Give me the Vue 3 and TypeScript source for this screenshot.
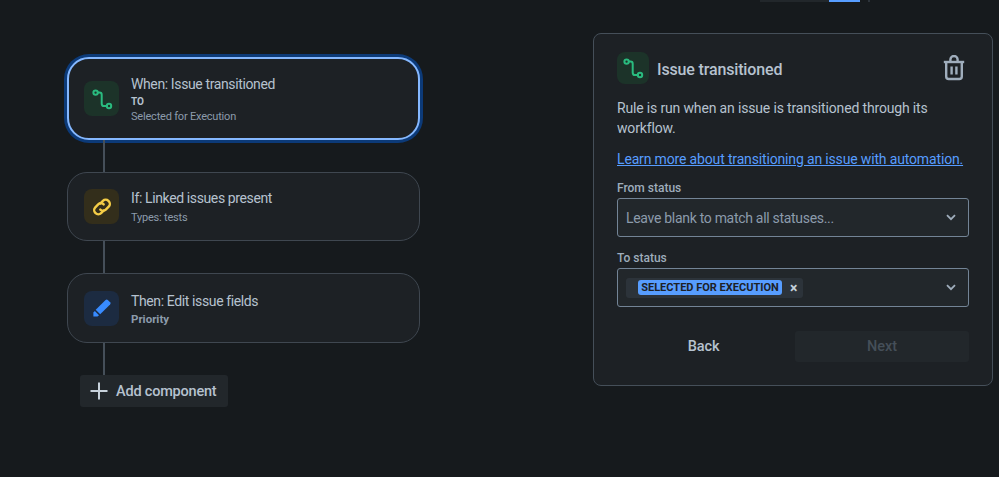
<script setup lang="ts">
interface Step {
  title: string
  kind: 'flow' | 'link' | 'edit'
  selected?: boolean
  label?: string
  detail?: string
}

const steps: Step[] = [
  { title: 'When: Issue transitioned', kind: 'flow', selected: true, label: 'TO', detail: 'Selected for Execution' },
  { title: 'If: Linked issues present', kind: 'link', detail: 'Types: tests' },
  { title: 'Then: Edit issue fields', kind: 'edit', label: 'Priority' },
]
</script>

<template>
  <div class="page">
    <div class="topbar"><span class="track"></span><span class="thumb"></span><span class="dot"></span></div>
    <main class="layout">
      <section class="flow">
        <template v-for="step in steps" :key="step.title">
          <article class="step" :class="[`step-${step.kind}`, { selected: step.selected }]">
            <span class="tile" :class="`tile-${step.kind}`">
              <svg v-if="step.kind === 'flow'" viewBox="0 0 24 24" width="24" height="24" fill="none" stroke="#2abb7f" stroke-width="2">
                <circle cx="5.6" cy="5.6" r="2.2" />
                <circle cx="19" cy="19" r="2.2" />
                <path d="M7.8 5.6h1.7c1.4 0 2.2.9 2.2 2.2v8.6c0 1.5.9 2.6 2.3 2.6h2.8" stroke-linecap="round" />
              </svg>
              <svg v-else-if="step.kind === 'link'" viewBox="0 0 24 24" width="24" height="24" fill="none" stroke="#f5cd47" stroke-width="2.4">
                <path d="M10.2 8.6l2.7-2.7a3.9 3.9 0 0 1 5.5 0l.3.3a3.9 3.9 0 0 1 0 5.5l-2.9 2.9a3.9 3.9 0 0 1-5.5 0" stroke-linecap="round" />
                <path d="M13.8 15.4l-2.7 2.7a3.9 3.9 0 0 1-5.5 0l-.3-.3a3.9 3.9 0 0 1 0-5.5l2.9-2.9a3.9 3.9 0 0 1 5.5 0" stroke-linecap="round" />
              </svg>
              <svg v-else viewBox="0 0 24 24" width="24" height="24" fill="#388bff">
                <path d="M15.6 3.9a1.6 1.6 0 0 1 2.2 0l2.3 2.3a1.6 1.6 0 0 1 0 2.2l-9.9 9.9-4.5-4.5z" />
                <path d="M4.8 15l4.2 4.2-1.5 1.3H3.4v-3.9z" />
              </svg>
            </span>
            <div class="step-text">
              <div class="step-title">{{ step.title }}</div>
              <div v-if="step.label" class="step-label" :class="{ priority: step.kind === 'edit' }">{{ step.label }}</div>
              <div v-if="step.detail" class="step-detail">{{ step.detail }}</div>
            </div>
          </article>
          <div class="connector"></div>
        </template>
        <button class="add" type="button">
          <svg viewBox="0 0 18 18" width="18" height="18" fill="none" stroke="#c7d1db" stroke-width="2">
            <path d="M9 0.5v17M0.5 9h17" />
          </svg>
          <span>Add component</span>
        </button>
      </section>

      <aside class="panel">
        <header class="panel-head">
          <span class="tile tile-flow tile-lg">
            <svg viewBox="0 0 24 24" width="24" height="24" fill="none" stroke="#2abb7f" stroke-width="2">
              <circle cx="5.6" cy="5.6" r="2.2" />
              <circle cx="19" cy="19" r="2.2" />
              <path d="M7.8 5.6h1.7c1.4 0 2.2.9 2.2 2.2v8.6c0 1.5.9 2.6 2.3 2.6h2.8" stroke-linecap="round" />
            </svg>
          </span>
          <h2 class="panel-title">Issue transitioned</h2>
          <svg class="trash" viewBox="0 0 22 26" width="22" height="26" fill="none" stroke="#9fadbc" stroke-width="2.4">
            <path d="M0.8 7h20.4" />
            <path d="M7.4 7V4.6a3.6 3.6 0 0 1 7.2 0V7" />
            <path d="M3.2 7v14.4a2.6 2.6 0 0 0 2.6 2.6h10.4a2.6 2.6 0 0 0 2.6-2.6V7" />
            <path d="M8.6 11.5v8M13.4 11.5v8" />
          </svg>
        </header>
        <p class="desc">Rule is run when an issue is transitioned through its workflow.</p>
        <a class="learn" href="#">Learn more about transitioning an issue with automation.</a>

        <label class="field-label from">From status</label>
        <div class="select">
          <span class="placeholder">Leave blank to match all statuses...</span>
          <svg class="chev" viewBox="0 0 10 7" width="10" height="7" fill="none" stroke="#9fadbc" stroke-width="1.8">
            <path d="M1 1.2l4 4 4-4" />
          </svg>
        </div>

        <label class="field-label to">To status</label>
        <div class="select select-multi">
          <span class="chip-wrap">
            <span class="chip">SELECTED FOR EXECUTION</span>
            <span class="chip-x">×</span>
          </span>
          <svg class="chev" viewBox="0 0 10 7" width="10" height="7" fill="none" stroke="#9fadbc" stroke-width="1.8">
            <path d="M1 1.2l4 4 4-4" />
          </svg>
        </div>

        <footer class="actions">
          <button class="btn back" type="button">Back</button>
          <button class="btn next" type="button" disabled>Next</button>
        </footer>
      </aside>
    </main>
  </div>
</template>

<style>
html,
body {
  margin: 0;
  background: #161a1d;
}
</style>

<style scoped>
.page {
  width: 999px;
  height: 477px;
  overflow: hidden;
  background: #161a1d;
  font-family: Roboto, "Noto Sans", sans-serif;
  color: #b6c2cf;
  box-sizing: border-box;
}
.topbar {
  display: flex;
  height: 2px;
  margin-left: 760px;
}
.track {
  width: 69px;
  background: #22272b;
}
.thumb {
  width: 31px;
  background: #579dff;
}
.dot {
  width: 2px;
  margin-left: 8px;
  background: #2c333a;
}
.layout {
  display: flex;
  align-items: flex-start;
  padding: 31px 6px 0 67px;
}
.flow {
  width: 353px;
  margin-top: 24px;
  margin-right: 173px;
  display: flex;
  flex-direction: column;
  align-items: flex-start;
}
.step {
  width: 100%;
  box-sizing: border-box;
  height: 70px;
  display: flex;
  align-items: center;
  gap: 12px;
  padding: 0 16px;
  background: #1d2125;
  border: 1px solid #3f4750;
  border-radius: 20px;
}
.step-link {
  height: 69px;
}
.step.selected {
  height: 83px;
  border: 2px solid #85b8ff;
  box-shadow: 0 0 0 3px #0c3a78;
  padding: 0 15px;
  border-radius: 22px;
}
.tile {
  flex: none;
  width: 35px;
  height: 35px;
  border-radius: 8px;
  display: flex;
  align-items: center;
  justify-content: center;
}
.tile-flow {
  background: #1c3329;
}
.tile-link {
  background: #332e1b;
}
.tile-edit {
  background: #1c2b41;
}
.tile-lg {
  width: 32px;
  height: 32px;
}
.step-text {
  padding-top: 2px;
}
.step-title {
  font-size: 14px;
  line-height: 18px;
  letter-spacing: -0.38px;
  color: #b6c2cf;
}
.step-label {
  font-size: 10px;
  font-weight: 700;
  line-height: 14px;
  margin-top: 2px;
  color: #b6c2cf;
}
.step-label.priority {
  font-size: 11.5px;
  line-height: 16px;
  color: #8c9bab;
  margin-top: 1px;
}
.step-detail {
  font-size: 11px;
  line-height: 16px;
  letter-spacing: -0.2px;
  color: #8c9bab;
}
.step-link .step-detail {
  margin-top: 3px;
}
.connector {
  width: 2px;
  height: 32px;
  margin-left: 36px;
  background: #454f59;
}
.add {
  margin-left: 13px;
  width: 148px;
  height: 32px;
  display: flex;
  align-items: center;
  gap: 8px;
  padding: 0 10px;
  border: 0;
  border-radius: 3px;
  background: #22272b;
  color: #b6c2cf;
  font: 500 14.5px Roboto, sans-serif;
  letter-spacing: -0.2px;
  box-sizing: border-box;
  white-space: nowrap;
}
.add svg {
  flex: none;
}
.panel {
  width: 400px;
  height: 353px;
  flex: none;
  box-sizing: border-box;
  padding: 18px 23px 0;
  background: #1d2125;
  border: 1px solid #454f59;
  border-radius: 8px;
}
.panel-head {
  display: flex;
  align-items: center;
  height: 32px;
  gap: 8px;
}
.panel-title {
  margin: 0;
  padding-top: 2px;
  font-size: 16px;
  font-weight: 500;
  letter-spacing: -0.15px;
  color: #b6c2cf;
  flex: 1;
}
.trash {
  margin-right: 4px;
}
.desc {
  margin: 14px 0 0;
  font-size: 14px;
  line-height: 20px;
  letter-spacing: -0.16px;
  color: #b6c2cf;
}
.learn {
  display: block;
  margin-top: 11px;
  font-size: 14px;
  line-height: 20px;
  letter-spacing: -0.155px;
  color: #579dff;
  white-space: nowrap;
}
.field-label {
  display: block;
  font-size: 12px;
  font-weight: 500;
  line-height: 16px;
  color: #9fadbc;
}
.from {
  margin-top: 11px;
}
.to {
  margin-top: 13px;
}
.select {
  box-sizing: border-box;
  height: 39px;
  margin-top: 2px;
  display: flex;
  align-items: center;
  justify-content: space-between;
  padding: 0 12px 0 8px;
  background: #22272b;
  border: 1px solid #738496;
  border-radius: 3px;
}
.placeholder {
  font-size: 14px;
  letter-spacing: -0.3px;
  color: #8c9bab;
}
.chip-wrap {
  width: 177px;
  height: 20px;
  box-sizing: border-box;
  padding-left: 12px;
  display: flex;
  align-items: center;
  background: #2c333a;
  border-radius: 3px;
}
.chip {
  box-sizing: border-box;
  width: 144px;
  height: 15px;
  line-height: 15px;
  text-align: center;
  background: #579dff;
  color: #1d2125;
  border-radius: 3px;
  font-size: 11px;
  font-weight: 700;
  white-space: nowrap;
}
.chip-x {
  margin-left: 8px;
  font-size: 14px;
  font-weight: 700;
  color: #c7d1db;
}
.actions {
  display: flex;
  gap: 5px;
  margin-top: 24px;
}
.btn {
  height: 31px;
  border: 0;
  border-radius: 3px;
  font: 500 14.5px Roboto, sans-serif;
  letter-spacing: -0.1px;
}
.back {
  width: 173px;
  background: transparent;
  color: #b6c2cf;
}
.next {
  width: 174px;
  background: #22272b;
  color: #454f59;
}
</style>
